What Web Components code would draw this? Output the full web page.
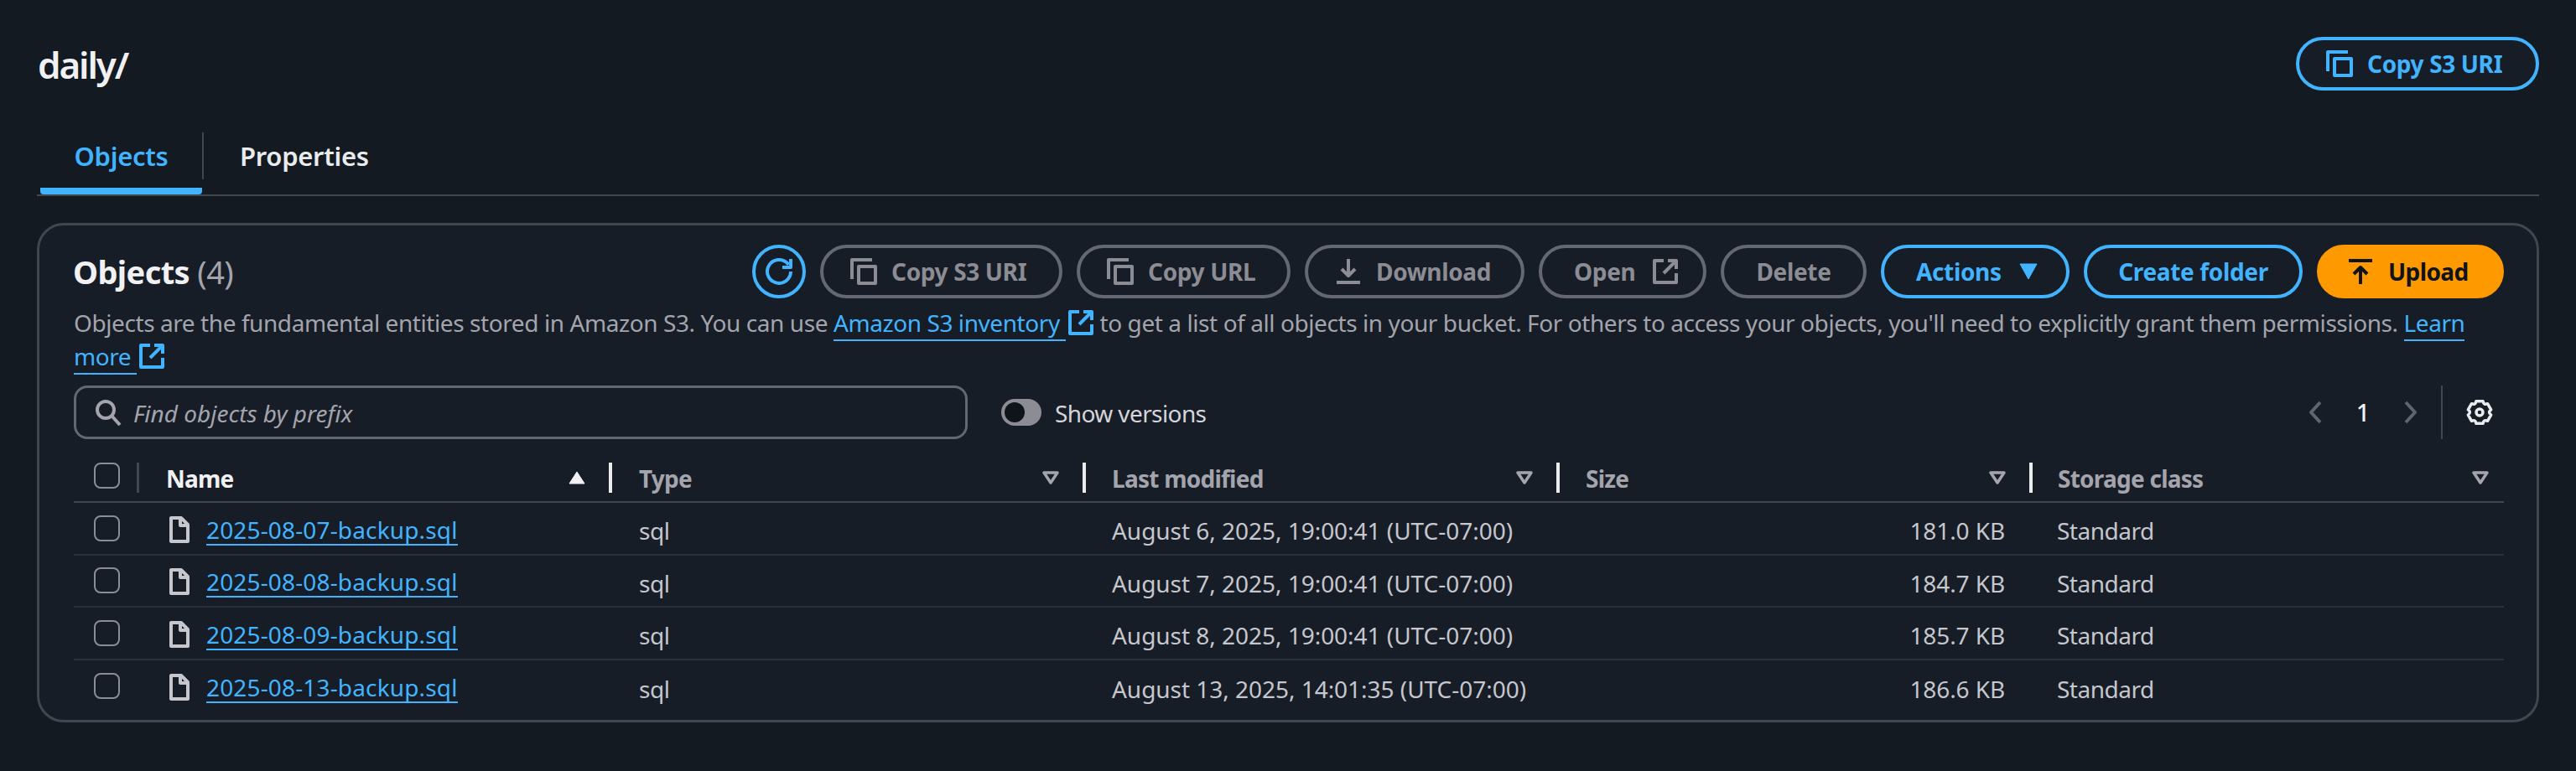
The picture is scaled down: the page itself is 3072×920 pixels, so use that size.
<!DOCTYPE html>
<html lang="en">
<head>
<meta charset="utf-8">
<title>daily/</title>
<style>
  html, body { margin: 0; background: #131a22; }
  body { font-family: "Noto Sans", sans-serif; font-size: 28px; color: #c6c6cd; --cols: 78px 564px 565px 565px 564px 1fr; }
</style>
</head>
<body>
<bucket-page>
  <page-header slot="header" heading="daily/"></page-header>
  <tab-bar slot="tabs"></tab-bar>
  <objects-panel slot="panel">
    <toolbar-actions slot="actions"></toolbar-actions>
    <object-table slot="table">
      <object-row name="2025-08-07-backup.sql" modified="August 6, 2025, 19:00:41 (UTC-07:00)" size="181.0 KB"></object-row>
      <object-row name="2025-08-08-backup.sql" modified="August 7, 2025, 19:00:41 (UTC-07:00)" size="184.7 KB"></object-row>
      <object-row name="2025-08-09-backup.sql" modified="August 8, 2025, 19:00:41 (UTC-07:00)" size="185.7 KB"></object-row>
      <object-row name="2025-08-13-backup.sql" modified="August 13, 2025, 14:01:35 (UTC-07:00)" size="186.6 KB" last></object-row>
    </object-table>
  </objects-panel>
</bucket-page>

<script>
const ICONS = {
  copy: '<path d="M2 25V2h24"/><rect x="10" y="10" width="20" height="20"/>',
  refresh: '<path d="M20 11h10V1"/><path d="M30 16a14 14 0 1 1-2.6-8.2"/>',
  download: '<path d="M16 1v20M8 13l8 8 8-8M2 29h28"/>',
  upload: '<path d="M2 3h28M16 31V11M8 19l8-8 8 8"/>',
  open: '<path d="M14 3H3v26h26V18"/><path d="M19 3h10v10M29 3L14 18"/>',
  search: '<circle cx="13" cy="13" r="10"/><path d="M20 20l10 11"/>',
  file: '<path d="M2 2h12l8 8v20H2z"/><path d="M13 2v9h9"/>',
  prev: '<path d="M14 2L3 14l11 12"/>',
  next: '<path d="M2 2l11 12L2 26"/>'
};

function gearPath() {
  const cx = 16, cy = 16, points = [];
  let d = '';
  for (let i = 0; i < 6; i++) {
    const a = (i * 60 - 90) * Math.PI / 180;
    const side = 0.3;
    const p1 = [cx + 14 * Math.cos(a - side), cy + 14 * Math.sin(a - side)];
    const p2 = [cx + 14 * Math.cos(a + side), cy + 14 * Math.sin(a + side)];
    const v = a + Math.PI / 6;
    const q = [cx + 9.5 * Math.cos(v), cy + 9.5 * Math.sin(v)];
    points.push({ p1, p2, q });
  }
  points.forEach((pt, i) => {
    const f = (n) => n.toFixed(2);
    const next = points[(i + 1) % 6];
    if (i === 0) d += `M${f(pt.p1[0])} ${f(pt.p1[1])}`;
    d += `L${f(pt.p2[0])} ${f(pt.p2[1])}Q${f(pt.q[0])} ${f(pt.q[1])} ${f(next.p1[0])} ${f(next.p1[1])}`;
  });
  return d + 'Z';
}
ICONS.gear = `<path d="${gearPath()}"/><circle cx="16" cy="16" r="4"/>`;

class AwsIcon extends HTMLElement {
  connectedCallback() {
    const name = this.getAttribute('name');
    const w = this.getAttribute('w') || 32;
    const h = this.getAttribute('h') || 32;
    const sw = this.getAttribute('stroke') || 4;
    this.attachShadow({ mode: 'open' }).innerHTML = `
      <style>
        :host { display: inline-flex; flex: none; line-height: 0; }
        svg { display: block; fill: none; stroke: currentColor; stroke-width: ${sw}; stroke-linejoin: round; }
      </style>
      <svg width="${w}" height="${h}" viewBox="0 0 ${w} ${h}">${ICONS[name]}</svg>`;
  }
}
customElements.define('aws-icon', AwsIcon);

class AwsButton extends HTMLElement {
  constructor() {
    super();
    this.attachShadow({ mode: 'open' }).innerHTML = `
      <style>
        :host { display: inline-flex; flex: none; box-sizing: border-box; height: 64px; align-items: center; justify-content: center; gap: 17px;
          border: 4px solid #42b4ff; border-radius: 32px; color: #42b4ff; font-weight: 700; font-size: 28px; letter-spacing: -0.35px; white-space: nowrap; }
        :host([kind="disabled"]) { border-color: #656871; color: #8c8c94; }
        :host([kind="primary"]) { border-color: #ff9900; background: #ff9900; color: #0f141a; letter-spacing: -0.6px; }
        :host([kind="filled"]) { background: #161d26; }
        :host([lead="icon"]) { justify-content: flex-start; padding-left: 32px; }
        :host([lead="text"]) { justify-content: flex-start; padding-left: 38px; gap: 20px; }
      </style>
      <slot></slot>`;
  }
}
customElements.define('aws-button', AwsButton);

class PageHeader extends HTMLElement {
  connectedCallback() {
    this.attachShadow({ mode: 'open' }).innerHTML = `
      <style>
        :host { display: flex; align-items: center; justify-content: space-between; height: 64px; }
        h1 { margin: 2px 0 0 1px; font-size: 44px; font-weight: 600; letter-spacing: -2.1px; color: #f1f1f4; line-height: 64px; }
      </style>
      <h1>${this.getAttribute('heading')}</h1>
      <aws-button kind="filled" lead="icon" style="width:290px"><aws-icon name="copy"></aws-icon>Copy S3 URI</aws-button>`;
  }
}
customElements.define('page-header', PageHeader);

class TabBar extends HTMLElement {
  connectedCallback() {
    this.attachShadow({ mode: 'open' }).innerHTML = `
      <style>
        :host { display: flex; height: 74px; margin-top: 50px; border-bottom: 2px solid #414750; font-size: 31px; font-weight: 600; letter-spacing: -0.3px; }
        .tab { box-sizing: border-box; height: 74px; display: flex; align-items: flex-start; }
        .label { height: 56px; display: flex; align-items: center; }
        .active { width: 193px; margin-left: 4px; justify-content: center; color: #42b4ff; border-bottom: 8px solid #42b4ff; border-radius: 0 0 4px 4px; }
        .sep { width: 2px; height: 56px; background: #414750; flex: none; }
        .other { margin-left: 43px; color: #e9ebed; }
      </style>
      <div class="tab active"><span class="label">Objects</span></div>
      <div class="sep"></div>
      <div class="tab other"><span class="label">Properties</span></div>`;
  }
}
customElements.define('tab-bar', TabBar);

class ToolbarActions extends HTMLElement {
  connectedCallback() {
    this.attachShadow({ mode: 'open' }).innerHTML = `
      <style>
        :host { display: flex; align-items: center; gap: 17px; }
      </style>
      <aws-button style="width:64px"><aws-icon name="refresh"></aws-icon></aws-button>
      <aws-button kind="disabled" lead="icon" style="width:289px"><aws-icon name="copy"></aws-icon>Copy S3 URI</aws-button>
      <aws-button kind="disabled" lead="icon" style="width:255px"><aws-icon name="copy"></aws-icon>Copy URL</aws-button>
      <aws-button kind="disabled" lead="icon" style="width:262px"><aws-icon name="download"></aws-icon>Download</aws-button>
      <aws-button kind="disabled" lead="text" style="width:200px">Open<aws-icon name="open"></aws-icon></aws-button>
      <aws-button kind="disabled" style="width:174px">Delete</aws-button>
      <aws-button lead="text" style="width:225px">Actions<svg width="24" height="20" viewBox="0 0 24 20"><path d="M2 1h20L12 19z" fill="currentColor" stroke="currentColor" stroke-linejoin="round"/></svg></aws-button>
      <aws-button style="width:261px">Create folder</aws-button>
      <aws-button kind="primary" lead="icon" style="width:223px"><aws-icon name="upload"></aws-icon>Upload</aws-button>`;
  }
}
customElements.define('toolbar-actions', ToolbarActions);

class LinkText extends HTMLElement {
  constructor() {
    super();
    this.attachShadow({ mode: 'open' }).innerHTML = `
      <style>
        :host { color: #42b4ff; }
        a { color: inherit; text-decoration: none; border-bottom: 2px solid #42b4ff; padding-bottom: 1px; }
        aws-icon { vertical-align: -5px; margin-left: 2px; }
      </style>
      <a><slot></slot></a><aws-icon name="open" w="32" h="32"></aws-icon>`;
  }
}
customElements.define('link-text', LinkText);

class LinkTextPlain extends HTMLElement {
  constructor() {
    super();
    this.attachShadow({ mode: 'open' }).innerHTML = `
      <style>
        :host { color: #42b4ff; border-bottom: 2px solid #42b4ff; padding-bottom: 1px; }
      </style>
      <slot></slot>`;
  }
}
customElements.define('link-text-plain', LinkTextPlain);

class ObjectsPanel extends HTMLElement {
  constructor() {
    super();
    this.attachShadow({ mode: 'open' }).innerHTML = `
      <style>
        :host { display: block; box-sizing: border-box; height: 596px; margin-top: 32px; padding: 23px 39px 0 41px; border: 3px solid #414750; border-radius: 32px; background: #161d26; }
        .top { display: flex; align-items: center; justify-content: space-between; height: 64px; }
        h2 { margin: 0 0 0 -1px; font-size: 38px; font-weight: 700; letter-spacing: -0.6px; color: #f1f1f4; }
        h2 span { font-weight: 400; color: #a4a4ad; }
        p { margin: 9px 0 0; font-size: 28px; line-height: 40px; color: #a4a4ad; white-space: nowrap; letter-spacing: -0.42px; }
        .filters { display: flex; align-items: center; height: 64px; margin-top: 15px; }
        .search { box-sizing: border-box; width: 1066px; height: 64px; display: flex; align-items: center; gap: 14px; padding-left: 22px; border: 3px solid #656871; border-radius: 16px; color: #a4a4ad; font-style: italic; }
        .search span { padding-top: 2px; }
        .toggle { box-sizing: border-box; width: 48px; height: 32px; margin-left: 40px; padding: 4px; border-radius: 16px; background: #8c8c94; }
        .toggle i { display: block; width: 24px; height: 24px; border-radius: 50%; background: #0f141a; }
        .versions { margin-left: 16px; padding-top: 2px; color: #d5d5db; letter-spacing: -0.6px; }
        .pager { margin-left: auto; display: flex; align-items: center; color: #5f6570; }
        .num { width: 98px; text-align: center; color: #f1f1f4; font-weight: 500; }
        .bar { width: 2px; height: 64px; margin: 0 28px; background: #414750; }
        .gear { color: #e9ebed; margin-right: 13px; }
      </style>
      <div class="top">
        <h2>Objects <span>(4)</span></h2>
        <slot name="actions"></slot>
      </div>
      <p>Objects are the fundamental entities stored in Amazon S3. You can use <link-text>Amazon S3 inventory&nbsp;</link-text> to get a list of all objects in your bucket. For others to access your objects, you'll need to explicitly grant them permissions. <link-text-plain>Learn</link-text-plain><br><link-text>more&nbsp;</link-text></p>
      <div class="filters">
        <div class="search"><aws-icon name="search"></aws-icon><span>Find objects by prefix</span></div>
        <div class="toggle"><i></i></div>
        <span class="versions">Show versions</span>
        <div class="pager">
          <aws-icon name="prev" w="16" h="28"></aws-icon>
          <span class="num">1</span>
          <aws-icon name="next" w="16" h="28"></aws-icon>
          <span class="bar"></span>
          <aws-icon class="gear" name="gear" w="32" h="32" stroke="3.5"></aws-icon>
        </div>
      </div>
      <slot name="table"></slot>`;
  }
}
customElements.define('objects-panel', ObjectsPanel);

class CheckBox extends HTMLElement {
  constructor() {
    super();
    this.attachShadow({ mode: 'open' }).innerHTML = `
      <style>
        :host { display: block; box-sizing: border-box; width: 31px; height: 31px; border: 2.5px solid #8c8c94; border-radius: 8px; }
      </style>`;
  }
}
customElements.define('check-box', CheckBox);

class HeadCell extends HTMLElement {
  connectedCallback() {
    const sort = this.hasAttribute('sorted');
    this.attachShadow({ mode: 'open' }).innerHTML = `
      <style>
        :host { display: flex; box-sizing: border-box; height: 36px; align-items: center; justify-content: space-between; padding: 0 28px 0 32px; border-right: 4px solid #e9ebed; font-weight: 700; color: #a4a4ad; letter-spacing: -0.75px; }
        :host([sorted]) { color: #f1f1f4; }
        :host([tight]) { padding-left: 31px; }
        :host([last]) { border-right: 0; padding-right: 18px; padding-left: 30px; }
        span { padding-top: 2px; }
        svg { display: block; flex: none; }
      </style>
      <span><slot></slot></span>
      ${sort
        ? '<svg width="20" height="16" viewBox="0 0 20 16"><path d="M10 1L19 15H1z" fill="#f1f1f4" stroke="#f1f1f4" stroke-linejoin="round"/></svg>'
        : '<svg width="20" height="16" viewBox="0 0 20 16"><path d="M2 2h16l-8 12z" fill="none" stroke="#a4a4ad" stroke-width="3.5" stroke-linejoin="round"/></svg>'}`;
  }
}
customElements.define('head-cell', HeadCell);

class ObjectTable extends HTMLElement {
  constructor() {
    super();
    this.attachShadow({ mode: 'open' }).innerHTML = `
      <style>
        :host { display: block; margin-top: 16px; }
        .head { display: grid; grid-template-columns: var(--cols); align-items: center; box-sizing: border-box; height: 60px; padding: 12px 0 10px; border-bottom: 2px solid #414750; }
        .box { box-sizing: border-box; height: 36px; padding-left: 24px; border-right: 3px solid #414750; }
      </style>
      <div class="head">
        <div class="box"><check-box></check-box></div>
        <head-cell sorted>Name</head-cell>
        <head-cell>Type</head-cell>
        <head-cell tight>Last modified</head-cell>
        <head-cell tight>Size</head-cell>
        <head-cell last>Storage class</head-cell>
      </div>
      <slot></slot>`;
  }
}
customElements.define('object-table', ObjectTable);

class ObjectRow extends HTMLElement {
  connectedCallback() {
    const attr = (n) => this.getAttribute(n);
    this.attachShadow({ mode: 'open' }).innerHTML = `
      <style>
        :host { display: grid; grid-template-columns: var(--cols); align-items: center; box-sizing: border-box; height: 62.5px; border-bottom: 2px solid #2b313b; color: #c6c6cd; letter-spacing: -0.5px; }
        :host([last]) { border-bottom: 0; }
        .box { padding-left: 24px; }
        .name { display: flex; align-items: center; gap: 20px; padding: 3px 0 0 36px; }
        .name a { color: #42b4ff; border-bottom: 2px solid #42b4ff; line-height: 32px; padding: 3px 0 1px; letter-spacing: 0.15px; }
        aws-icon { color: #c6c6cd; }
        .txt { padding: 6px 0 0 32px; }
        .date { padding: 6px 0 0 31px; letter-spacing: -0.03px; }
        .size { text-align: right; padding: 6px 33px 0 0; letter-spacing: -0.1px; }
        .cls { padding: 6px 0 0 29px; }
      </style>
      <div class="box"><check-box></check-box></div>
      <div class="name"><aws-icon name="file" w="24" h="32"></aws-icon><a>${attr('name')}</a></div>
      <div class="txt">sql</div>
      <div class="date">${attr('modified')}</div>
      <div class="size">${attr('size')}</div>
      <div class="cls">Standard</div>`;
  }
}
customElements.define('object-row', ObjectRow);

class BucketPage extends HTMLElement {
  constructor() {
    super();
    this.attachShadow({ mode: 'open' }).innerHTML = `
      <style>
        :host { display: block; box-sizing: border-box; height: 920px; padding: 44px 44px 0; }
      </style>
      <slot name="header"></slot>
      <slot name="tabs"></slot>
      <slot name="panel"></slot>`;
  }
}
customElements.define('bucket-page', BucketPage);
</script>
</body>
</html>
